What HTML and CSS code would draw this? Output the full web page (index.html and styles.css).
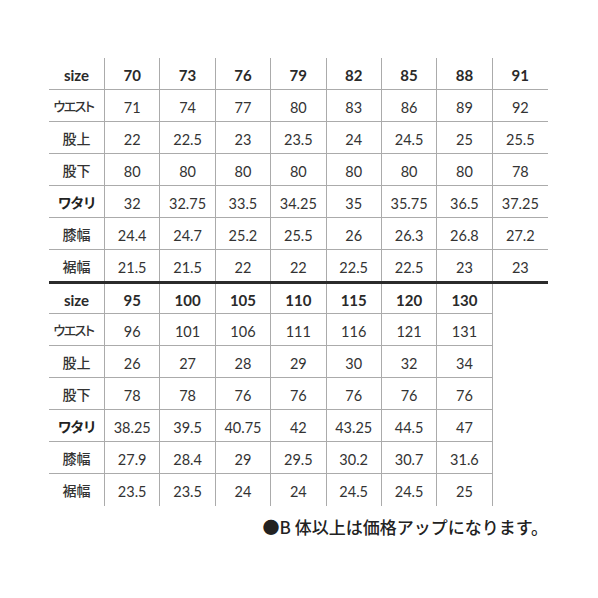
FILE: index.html
```html
<!DOCTYPE html>
<html lang="ja">
<head>
<meta charset="utf-8">
<link rel="stylesheet" href="styles.css">
</head>
<body>
<div class="chart">
  <div class="grid grid-a">
    <div class="c lab hd">size</div><div class="c hd">70</div><div class="c hd">73</div><div class="c hd">76</div><div class="c hd">79</div><div class="c hd">82</div><div class="c hd">85</div><div class="c hd">88</div><div class="c hd last">91</div>
    <div class="c lab jp narrow">ウエスト</div><div class="c">71</div><div class="c">74</div><div class="c">77</div><div class="c">80</div><div class="c">83</div><div class="c">86</div><div class="c">89</div><div class="c last">92</div>
    <div class="c lab jp">股上</div><div class="c">22</div><div class="c">22.5</div><div class="c">23</div><div class="c">23.5</div><div class="c">24</div><div class="c">24.5</div><div class="c">25</div><div class="c last">25.5</div>
    <div class="c lab jp">股下</div><div class="c">80</div><div class="c">80</div><div class="c">80</div><div class="c">80</div><div class="c">80</div><div class="c">80</div><div class="c">80</div><div class="c last">78</div>
    <div class="c lab jp bold">ワタリ</div><div class="c">32</div><div class="c">32.75</div><div class="c">33.5</div><div class="c">34.25</div><div class="c">35</div><div class="c">35.75</div><div class="c">36.5</div><div class="c last">37.25</div>
    <div class="c lab jp">膝幅</div><div class="c">24.4</div><div class="c">24.7</div><div class="c">25.2</div><div class="c">25.5</div><div class="c">26</div><div class="c">26.3</div><div class="c">26.8</div><div class="c last">27.2</div>
    <div class="c lab jp end">裾幅</div><div class="c end">21.5</div><div class="c end">21.5</div><div class="c end">22</div><div class="c end">22</div><div class="c end">22.5</div><div class="c end">22.5</div><div class="c end">23</div><div class="c last end">23</div>
  </div>
  <div class="divider"></div>
  <div class="grid grid-b">
    <div class="c lab hd first">size</div><div class="c hd first">95</div><div class="c hd first">100</div><div class="c hd first">105</div><div class="c hd first">110</div><div class="c hd first">115</div><div class="c hd first">120</div><div class="c hd first">130</div>
    <div class="c lab jp narrow">ウエスト</div><div class="c">96</div><div class="c">101</div><div class="c">106</div><div class="c">111</div><div class="c">116</div><div class="c">121</div><div class="c">131</div>
    <div class="c lab jp">股上</div><div class="c">26</div><div class="c">27</div><div class="c">28</div><div class="c">29</div><div class="c">30</div><div class="c">32</div><div class="c">34</div>
    <div class="c lab jp">股下</div><div class="c">78</div><div class="c">78</div><div class="c">76</div><div class="c">76</div><div class="c">76</div><div class="c">76</div><div class="c">76</div>
    <div class="c lab jp bold">ワタリ</div><div class="c">38.25</div><div class="c">39.5</div><div class="c">40.75</div><div class="c">42</div><div class="c">43.25</div><div class="c">44.5</div><div class="c">47</div>
    <div class="c lab jp">膝幅</div><div class="c">27.9</div><div class="c">28.4</div><div class="c">29</div><div class="c">29.5</div><div class="c">30.2</div><div class="c">30.7</div><div class="c">31.6</div>
    <div class="c lab jp end">裾幅</div><div class="c end">23.5</div><div class="c end">23.5</div><div class="c end">24</div><div class="c end">24</div><div class="c end">24.5</div><div class="c end">24.5</div><div class="c end">25</div>
  </div>
  <div class="note">●B 体以上は価格アップになります。</div>
</div>
</body>
</html>
```

FILE: styles.css
```css
html, body {
  margin: 0;
  padding: 0;
  background: #ffffff;
}

body {
  width: 598px;
  height: 598px;
  overflow: hidden;
  font-family: "Lato", "Noto Sans CJK JP", sans-serif;
  color: #333333;
}

.chart {
  margin: 58px 0 0 49px;
  width: 499px;
}

.grid {
  display: grid;
}

.grid-a {
  grid-template-columns: 56px repeat(8, 55.375px);
}

.grid-b {
  grid-template-columns: 56px repeat(7, 55.375px);
}

.c {
  box-sizing: border-box;
  height: 32px;
  display: flex;
  align-items: center;
  justify-content: center;
  border-right: 1px solid #ababab;
  border-bottom: 1px solid #ababab;
  font-size: 14.5px;
  padding-top: 3px;
  white-space: nowrap;
}

.grid-b .c.first {
  height: 30px;
}

.grid-a .c.end {
  height: 31px;
  border-bottom: none;
}

.grid-b .c.end {
  border-bottom: none;
}

.c.last {
  border-right: none;
}

.hd {
  font-weight: 700;
  font-size: 15px;
  color: #2a2a2a;
}

.jp {
  font-family: "Noto Sans CJK JP", sans-serif;
  font-weight: 500;
  font-size: 14px;
  color: #333333;
  padding-top: 0;
}

.jp.bold {
  font-weight: 700;
  color: #222222;
  letter-spacing: -1.5px;
}

.narrow {
  font-size: 13px;
  font-feature-settings: "palt";
  letter-spacing: -1.5px;
  padding-right: 6px;
}

.divider {
  height: 3px;
  background: #2b2b2b;
}

.note {
  margin-top: 11px;
  text-align: right;
  font-family: "Noto Sans CJK JP", sans-serif;
  font-weight: 500;
  font-size: 17px;
  line-height: 20px;
  color: #222222;
}
```
